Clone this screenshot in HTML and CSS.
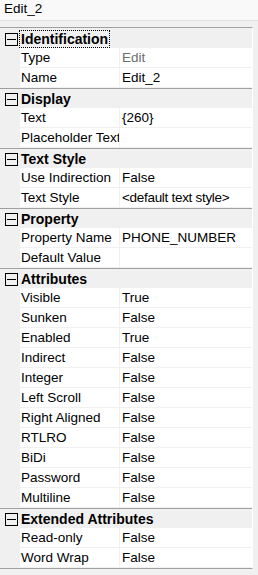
FILE: index.html
```html
<!DOCTYPE html>
<html lang="en">
<head>
    <meta charset="UTF-8">
    <meta name="viewport" content="width=device-width, initial-scale=1.0">
    <title>Edit_2 Properties</title>
    <link rel="stylesheet" href="styles.css">
</head>
<body>

    <!-- Name of the selected control -->
    <div class="title-bar">Edit_2</div>

    <div class="prop-grid">

        <div class="cat-row first">
            <span class="cat-toggle"><span class="minus-box"></span></span>
            <span class="cat-label focused">Identification</span>
        </div>
        <div class="prop-row"><span class="gutter"></span><span class="prop-name">Type</span><span class="prop-value readonly">Edit</span></div>
        <div class="prop-row"><span class="gutter"></span><span class="prop-name">Name</span><span class="prop-value">Edit_2</span></div>

        <div class="cat-row">
            <span class="cat-toggle"><span class="minus-box"></span></span>
            <span class="cat-label">Display</span>
        </div>
        <div class="prop-row"><span class="gutter"></span><span class="prop-name">Text</span><span class="prop-value">{260}</span></div>
        <div class="prop-row"><span class="gutter"></span><span class="prop-name">Placeholder Text</span><span class="prop-value"></span></div>

        <div class="cat-row">
            <span class="cat-toggle"><span class="minus-box"></span></span>
            <span class="cat-label">Text Style</span>
        </div>
        <div class="prop-row"><span class="gutter"></span><span class="prop-name">Use Indirection</span><span class="prop-value">False</span></div>
        <div class="prop-row"><span class="gutter"></span><span class="prop-name">Text Style</span><span class="prop-value tight">&lt;default text style&gt;</span></div>

        <div class="cat-row">
            <span class="cat-toggle"><span class="minus-box"></span></span>
            <span class="cat-label">Property</span>
        </div>
        <div class="prop-row"><span class="gutter"></span><span class="prop-name">Property Name</span><span class="prop-value">PHONE_NUMBER</span></div>
        <div class="prop-row"><span class="gutter"></span><span class="prop-name">Default Value</span><span class="prop-value"></span></div>

        <div class="cat-row">
            <span class="cat-toggle"><span class="minus-box"></span></span>
            <span class="cat-label">Attributes</span>
        </div>
        <div class="prop-row"><span class="gutter"></span><span class="prop-name">Visible</span><span class="prop-value">True</span></div>
        <div class="prop-row"><span class="gutter"></span><span class="prop-name">Sunken</span><span class="prop-value">False</span></div>
        <div class="prop-row"><span class="gutter"></span><span class="prop-name">Enabled</span><span class="prop-value">True</span></div>
        <div class="prop-row"><span class="gutter"></span><span class="prop-name">Indirect</span><span class="prop-value">False</span></div>
        <div class="prop-row"><span class="gutter"></span><span class="prop-name">Integer</span><span class="prop-value">False</span></div>
        <div class="prop-row"><span class="gutter"></span><span class="prop-name">Left Scroll</span><span class="prop-value">False</span></div>
        <div class="prop-row"><span class="gutter"></span><span class="prop-name">Right Aligned</span><span class="prop-value">False</span></div>
        <div class="prop-row"><span class="gutter"></span><span class="prop-name">RTLRO</span><span class="prop-value">False</span></div>
        <div class="prop-row"><span class="gutter"></span><span class="prop-name">BiDi</span><span class="prop-value">False</span></div>
        <div class="prop-row"><span class="gutter"></span><span class="prop-name">Password</span><span class="prop-value">False</span></div>
        <div class="prop-row"><span class="gutter"></span><span class="prop-name">Multiline</span><span class="prop-value">False</span></div>

        <div class="cat-row">
            <span class="cat-toggle"><span class="minus-box"></span></span>
            <span class="cat-label">Extended Attributes</span>
        </div>
        <div class="prop-row"><span class="gutter"></span><span class="prop-name">Read-only</span><span class="prop-value">False</span></div>
        <div class="prop-row"><span class="gutter"></span><span class="prop-name">Word Wrap</span><span class="prop-value">False</span></div>

    </div>

</body>
</html>
```

FILE: styles.css
```css
body {
    margin: 0;
    background-color: #F0F0F0;
    font-family: "Liberation Sans", Arial, sans-serif;
    font-size: 13.5px;
    color: #000000;
}

.title-bar {
    height: 20px;
    line-height: 18px;
    padding-left: 4px;
    background-color: #F9F9F9;
    border-bottom: 1px solid #E3E3E3;
    margin-bottom: 6px;
}

.prop-grid {
    width: 252px;
    border-top: 1px solid #A0A0A0;
    border-bottom: 1px solid #A0A0A0;
    border-right: 1px solid #FFFFFF;
    background-color: #F0F0F0;
}

.cat-row {
    display: flex;
    align-items: flex-start;
    height: 19px;
    border-top: 1px solid #A0A0A0;
    background-color: #F0F0F0;
}

.cat-row.first {
    border-top: none;
    height: 20px;
}

.cat-toggle {
    width: 15px;
    padding-left: 5px;
    padding-top: 4px;
    display: flex;
}

.cat-row.first .cat-toggle {
    padding-top: 5px;
}

.minus-box {
    width: 11px;
    height: 11px;
    border: 1px solid #000000;
    position: relative;
}

.minus-box::after {
    content: "";
    position: absolute;
    left: 1px;
    right: 1px;
    top: 5px;
    height: 1px;
    background-color: #000000;
}

.cat-label {
    font-size: 14px;
    font-weight: bold;
    margin-top: 2px;
    padding: 0 1px;
    line-height: 16px;
    white-space: nowrap;
}

.cat-row.first .cat-label {
    margin-top: 3px;
}

.cat-label.focused {
    outline: 1px dotted #000000;
    outline-offset: 0;
}

.prop-row {
    display: grid;
    grid-template-columns: 20px 100px 132px;
    height: 20px;
}

.gutter {
    background-color: #F0F0F0;
}

.prop-name,
.prop-value {
    background-color: #FFFFFF;
    border-bottom: 1px solid #F0F0F0;
    padding-top: 1px;
    line-height: 18px;
    white-space: nowrap;
    overflow: hidden;
}

.prop-name {
    padding-left: 1px;
    border-right: 1px solid #F0F0F0;
}

.prop-value {
    padding-left: 2px;
}

.prop-value.readonly {
    color: #6D6D6D;
}

.prop-value.tight {
    letter-spacing: -0.3px;
}
```
